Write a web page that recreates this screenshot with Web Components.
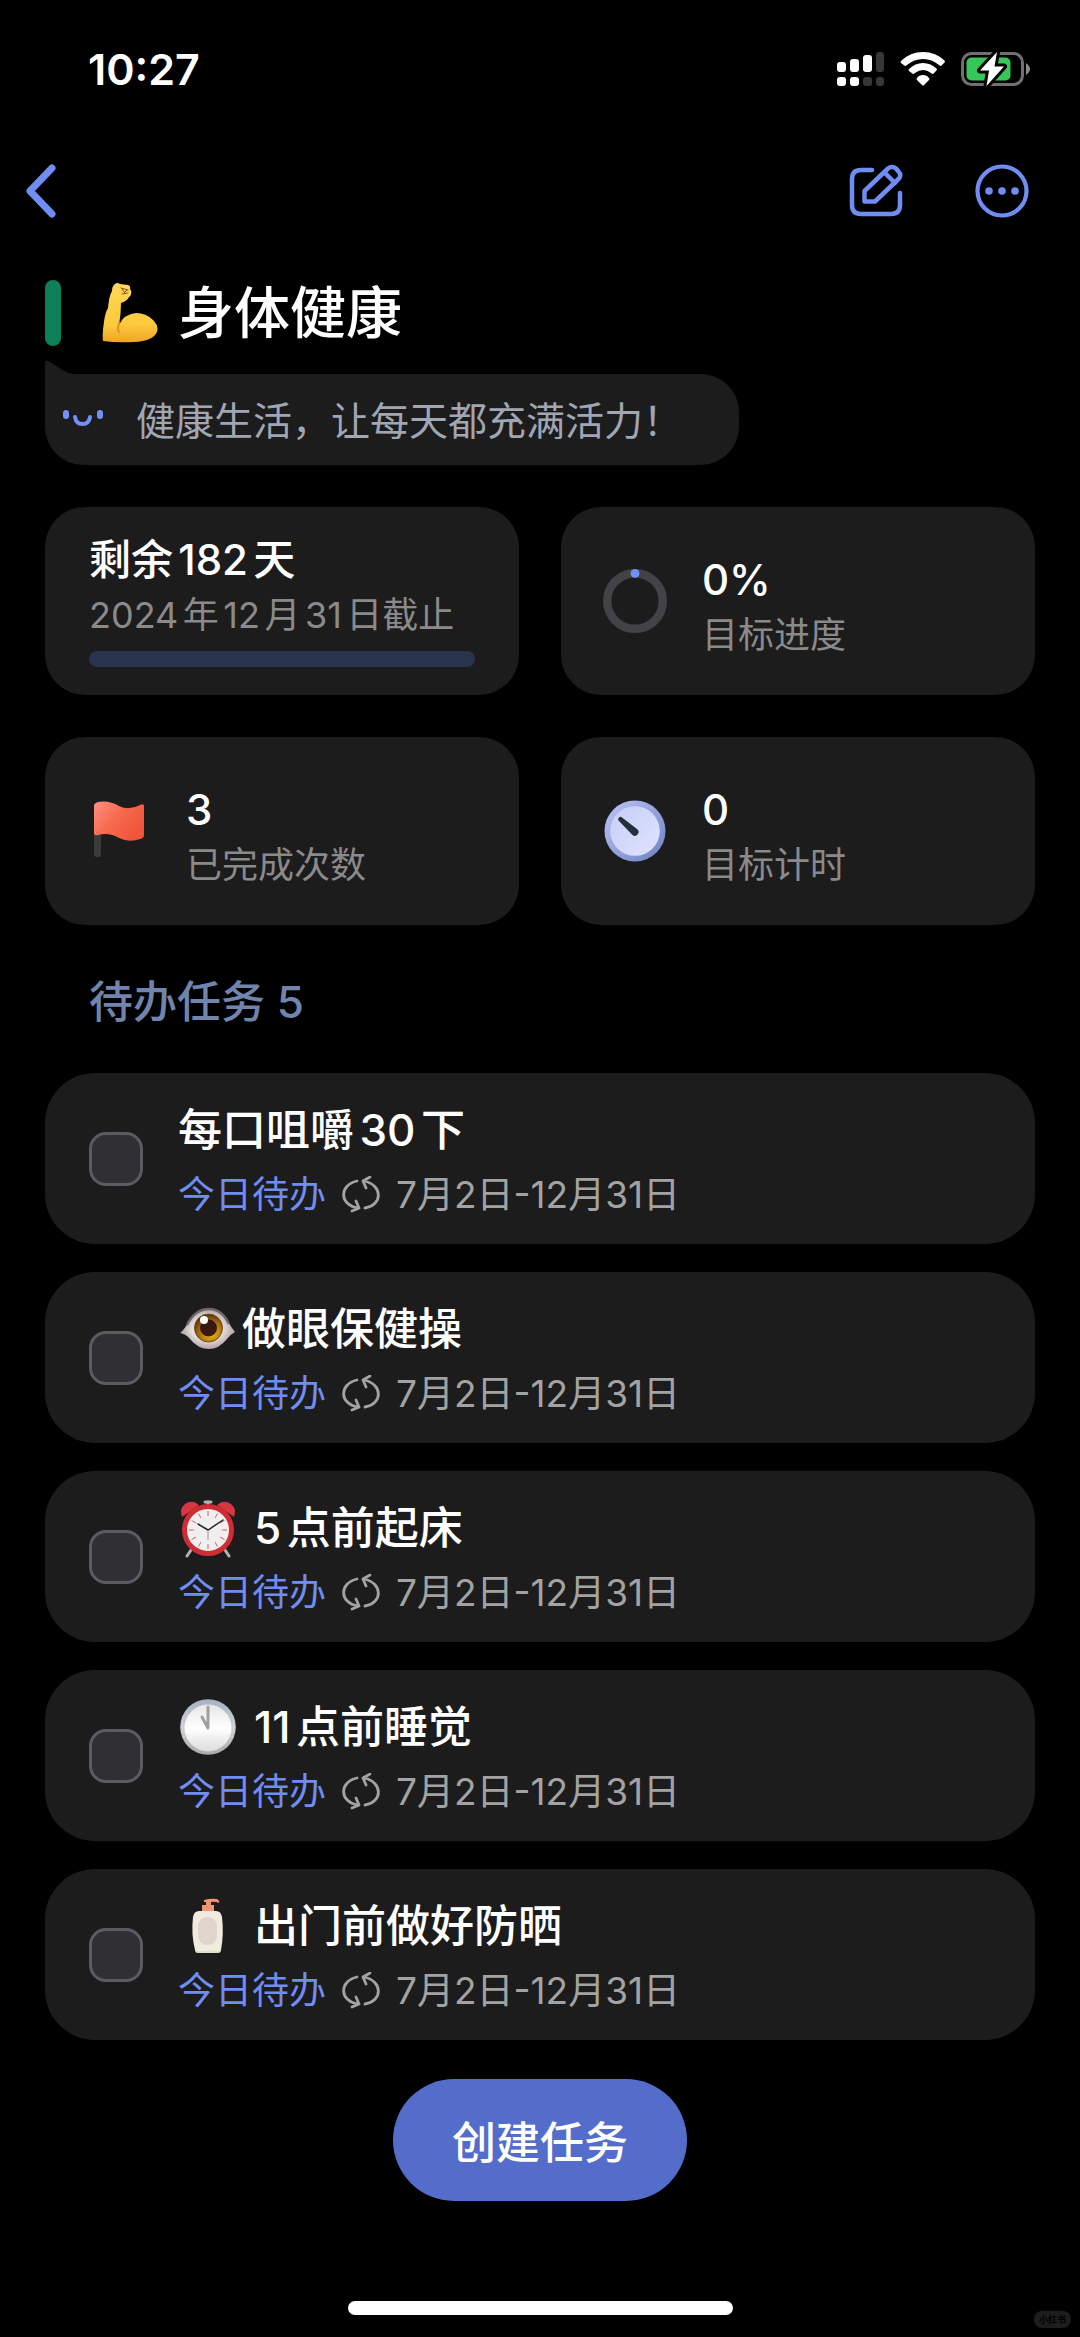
<!DOCTYPE html>
<html lang="zh-CN">
<head>
<meta charset="utf-8">
<meta name="viewport" content="width=device-width, initial-scale=1">
<title>身体健康</title>
<style>
:root {
  --card: #1c1c1d;
  --accent: #708df4;
  --muted: #8a8a8a;
  --gutter: 45px;
}
* { box-sizing: border-box; }
body {
  margin: 0;
  background: #000;
  color: #fff;
  font-family: Inter, "Noto Sans CJK SC", sans-serif;
  text-autospace: normal;
}
</style>
</head>
<body>

<goal-page>
  <status-bar slot="top">10:27</status-bar>
  <nav-bar slot="top"></nav-bar>

  <goal-title icon="arm">身体健康</goal-title>
  <speech-bubble>健康生活，让每天都充满活力！</speech-bubble>

  <stat-grid>
    <deadline-card value="0" max="182">
      剩余182天
      <span slot="label">2024年12月31日截止</span>
    </deadline-card>
    <stat-card icon="ring">0%<span slot="label">目标进度</span></stat-card>
    <stat-card icon="flag">3<span slot="label">已完成次数</span></stat-card>
    <stat-card icon="timer">0<span slot="label">目标计时</span></stat-card>
  </stat-grid>

  <task-list heading="待办任务 5">
    <task-item dates="7月2日-12月31日">每口咀嚼30下</task-item>
    <task-item icon="eye" tight dates="7月2日-12月31日">做眼保健操</task-item>
    <task-item icon="alarm" dates="7月2日-12月31日">5点前起床</task-item>
    <task-item icon="clock" dates="7月2日-12月31日">11点前睡觉</task-item>
    <task-item icon="lotion" dates="7月2日-12月31日">出门前做好防晒</task-item>
  </task-list>

  <create-button>创建任务</create-button>
  <home-indicator slot="bottom"></home-indicator>
  <corner-mark slot="bottom">小红书</corner-mark>
</goal-page>

<script>
var icons = {
  arm: `
    <svg width="60" height="60" viewBox="0 0 60 60">
      <defs>
        <linearGradient id="skin" x1="0" y1="0" x2="0" y2="1">
          <stop offset="0" stop-color="#ffd95a"/>
          <stop offset=".7" stop-color="#fdc93d"/>
          <stop offset="1" stop-color="#f0a424"/>
        </linearGradient>
      </defs>
      <path fill="url(#skin)" d="M15 1Q17-1 20 1L28 2Q31 3 30 6Q32 8 31 11Q31 13 29 14Q27 18 21 20Q21 31 19 42Q24 31 36 30Q46 30 53 37Q59 43 57 49Q53 58 34 59Q17 60 3 58Q2 51 4 39Q5 30 8 25Q9 13 12 8Q12 3 15 1Z"/>
      <path fill="none" stroke="#dd9323" stroke-width="2" stroke-linecap="round" d="M19 40Q17 46 19 49"/>
      <path fill="none" stroke="#8f5514" stroke-width="1" stroke-linecap="round" d="M21 5L28 7M22 11L28 10M22 6L25 10M27 7L24 10"/>
    </svg>`,
  ring: `
    <svg width="64" height="64" viewBox="0 0 64 64">
      <circle cx="32" cy="32" r="27.8" fill="none" stroke="#424346" stroke-width="8.4"/>
      <circle cx="32" cy="4.4" r="4.4" fill="#7290fa"/>
    </svg>`,
  flag: `
    <svg width="64" height="64" viewBox="0 0 64 64">
      <defs>
        <linearGradient id="cloth" x1="0" y1="0" x2="1" y2=".6">
          <stop offset="0" stop-color="#ff9080"/>
          <stop offset=".5" stop-color="#f66a4f"/>
          <stop offset="1" stop-color="#ef5538"/>
        </linearGradient>
      </defs>
      <rect x="7" y="28" width="7" height="30" rx="3" fill="#3b3b3b"/>
      <path fill="url(#cloth)" d="M7 7Q7 4 11 3Q22 1 32 7Q42 12 53 6Q57 4 57 7V36Q57 39 53 40Q42 44 32 39Q22 33 11 36Q7 37 7 34Z"/>
    </svg>`,
  timer: `
    <svg width="64" height="64" viewBox="0 0 64 64">
      <defs>
        <linearGradient id="rim" x1="0" y1="0" x2="1" y2="1">
          <stop offset=".1" stop-color="#b4bff0"/>
          <stop offset="1" stop-color="#6f7fc4"/>
        </linearGradient>
        <linearGradient id="dial" x1="0" y1="0" x2="1" y2="1">
          <stop offset="0" stop-color="#c6cef6"/>
          <stop offset="1" stop-color="#dfe4fd"/>
        </linearGradient>
      </defs>
      <circle cx="32" cy="32" r="30.5" fill="url(#rim)"/>
      <circle cx="32" cy="32" r="24.8" fill="url(#dial)"/>
      <path fill="#22303a" d="M16 22A2 2 0 0 1 19 18.500L34 30A3.600 3.600 0 0 1 29.500 36Z"/>
    </svg>`,
  eye: `
    <svg width="60" height="60" viewBox="0 0 60 60">
      <defs>
        <radialGradient id="ball" cx=".5" cy=".5" r=".55">
          <stop offset=".4" stop-color="#f4eeee"/>
          <stop offset="1" stop-color="#a89595"/>
        </radialGradient>
        <radialGradient id="iris" cx=".6" cy=".7" r=".7">
          <stop offset="0" stop-color="#f0b912"/>
          <stop offset=".6" stop-color="#a87110"/>
          <stop offset="1" stop-color="#57300f"/>
        </radialGradient>
      </defs>
      <path fill="url(#ball)" d="M2 34Q7 30 11 22Q19 10 31 10Q43 10 49 21Q53 28 57 33Q53 35 49 40Q41 50 31 50Q20 50 12 40Q8 35 2 34Z"/>
      <path fill="none" stroke="#6d6768" stroke-width="2.500" d="M9 26Q17 10 31 10Q44 10 51 25"/>
      <circle cx="30.500" cy="29" r="14" fill="url(#iris)" stroke="#6b4a1b"/>
      <circle cx="30.500" cy="29" r="8.500" fill="#3a1812"/>
      <circle cx="26" cy="21" r="4" fill="#fff"/>
    </svg>`,
  alarm: `
    <svg width="60" height="60" viewBox="0 0 60 60">
      <g stroke="#aeb2b8" stroke-width="3" stroke-linecap="round">
        <path d="M13 52L9 58M47 52L51 58M30 8V4"/>
        <path d="M27 4H33"/>
      </g>
      <path fill="#d93644" d="M4 19Q1 11 7 6Q14 1 21 7ZM56 19Q59 11 53 6Q46 1 39 7Z"/>
      <circle cx="30" cy="32" r="23.500" fill="#efefef" stroke="#cf2c36" stroke-width="5"/>
      <g stroke="#d8606a" stroke-width="1">
        <path d="M30 13V18M30 46V51M11 32H16M44 32H49M20.500 15.500L23 20M37 44L39.500 48.500M13.500 22.500L18 25M42 39L46.500 41.500M46.500 22.500L42 25M18 39L13.500 41.500M39.500 15.500L37 20M23 44L20.500 48.500"/>
      </g>
      <path fill="none" stroke="#25282c" stroke-width="1.500" stroke-linecap="round" d="M20 26L30 32L45 22"/>
      <path stroke="#999" stroke-width="1" d="M30 32V42"/>
    </svg>`,
  clock: `
    <svg width="60" height="60" viewBox="0 0 60 60">
      <defs>
        <linearGradient id="case" x1="0" y1="0" x2="0" y2="1">
          <stop offset="0" stop-color="#a7b0c4"/>
          <stop offset=".5" stop-color="#d0d3d5"/>
          <stop offset="1" stop-color="#a9a9a7"/>
        </linearGradient>
        <linearGradient id="plate" x1="0" y1="0" x2="0" y2="1">
          <stop offset="0" stop-color="#e6e6e6"/>
          <stop offset=".5" stop-color="#fff"/>
          <stop offset="1" stop-color="#dcdcdb"/>
        </linearGradient>
      </defs>
      <circle cx="30" cy="30" r="27.800" fill="url(#case)"/>
      <circle cx="30" cy="31" r="23.500" fill="url(#plate)"/>
      <path fill="none" stroke="#a0a0a0" stroke-width="3" stroke-linecap="round" stroke-linejoin="round" d="M24 20L30 31V10"/>
    </svg>`,
  lotion: `
    <svg width="60" height="60" viewBox="0 0 60 60">
      <path fill="#ee9674" d="M26 4Q33 2 39 3Q42 5 41 7Q37 5 33 6V9H36V16H24V9H28V6H26Z"/>
      <path fill="#f1ebdd" d="M21 15H38Q43 15 44 21Q46 38 43 54Q43 57 39 57H21Q17 57 17 54Q13 38 15 21Q16 15 21 15Z"/>
      <rect x="20" y="21" width="19" height="28" rx="9" fill="#e2d5cd"/>
      <path fill="none" stroke="#d8ceb8" stroke-width="1" d="M18 56H42"/>
    </svg>`,
  repeat: `
    <svg width="40" height="38" viewBox="0 0 40 38">
      <g fill="none" stroke="#a3a3a3" stroke-width="2.800" stroke-linecap="round" stroke-linejoin="round">
        <path d="M16 5C-2 9-2 29 17 32"/>
        <path d="M24 32C42 29 42 9 23 5"/>
        <path d="M15 25L18 32L11 35M29 1L22 5L25 12"/>
      </g>
    </svg>`,
  back: `
    <svg width="32" height="56" viewBox="0 0 32 56">
      <path fill="none" stroke="currentColor" stroke-width="7" stroke-linecap="round" stroke-linejoin="round" d="M27 5L5 28L27 51"/>
    </svg>`,
  edit: `
    <svg width="54" height="54" viewBox="0 0 54 54">
      <g fill="none" stroke="currentColor" stroke-width="4.500" stroke-linecap="round" stroke-linejoin="round">
        <path d="M23 6H12Q3 6 3 15V41Q3 50 12 50H42Q51 50 51 41V29"/>
        <path d="M15.500 37V27L39 4.500Q43 1.500 47 4.500L49.500 7.500Q53 11 49.500 15L26 37.500H15.500Z"/>
        <path d="M36 9L46 19"/>
      </g>
    </svg>`,
  more: `
    <svg width="54" height="54" viewBox="0 0 54 54">
      <circle cx="27" cy="27" r="24.500" fill="none" stroke="currentColor" stroke-width="4.200"/>
      <g fill="currentColor">
        <circle cx="14" cy="27" r="3.800"/>
        <circle cx="27" cy="27" r="3.800"/>
        <circle cx="40" cy="27" r="3.800"/>
      </g>
    </svg>`,
  face: `
    <svg width="42" height="20" viewBox="0 0 42 20">
      <rect x="0" y="2" width="6" height="9" rx="3" fill="#7290fa"/>
      <rect x="34" y="2" width="6" height="9" rx="3" fill="#7290fa"/>
      <path fill="none" stroke="#7290fa" stroke-width="4" stroke-linecap="round" d="M12 9Q13 16 19.500 16Q26 16 27 9"/>
    </svg>`,
  signal: `
    <svg width="48" height="36" viewBox="0 0 48 36">
      <g fill="#fff">
        <rect x="0" y="11" width="9" height="10" rx="3"/>
        <rect x="13" y="8" width="9" height="13" rx="3"/>
        <rect x="26" y="4" width="9" height="17" rx="3"/>
        <rect x="0" y="26" width="9" height="9" rx="3"/>
        <rect x="13" y="26" width="9" height="9" rx="3"/>
      </g>
      <g fill="#363636">
        <rect x="39" y="1" width="8" height="20" rx="3"/>
        <rect x="26" y="26" width="9" height="9" rx="3"/>
        <rect x="39" y="26" width="8" height="9" rx="3"/>
      </g>
    </svg>`,
  wifi: `
    <svg width="46" height="36" viewBox="0 0 46 36">
      <g fill="#fff">
        <path d="M1 10Q10 1 23 1Q36 1 45 10Q45 11 44 12L41 15Q40 15 39 14Q32 8 23 8Q14 8 7 14Q6 15 5 15L1 12Q0 11 1 10Z"/>
        <path d="M9 18Q15 12 23 12Q31 12 37 18Q37 19 36 20L33 23Q32 23 31 22Q27 19 23 19Q19 19 15 22Q14 23 13 23L9 20Q8 19 9 18Z"/>
        <path d="M17 27Q19 24 23 24Q27 24 29 27Q30 28 29 29L24 34Q23 35 22 34L17 29Q16 28 17 27Z"/>
      </g>
    </svg>`,
  battery: `
    <svg width="70" height="36" viewBox="0 0 70 36">
      <rect x="1.500" y="2.500" width="60" height="31" rx="9" fill="none" stroke="#707070" stroke-width="3"/>
      <path d="M65 12Q69 15 69 18Q69 21 65 24Z" fill="#8a8a8a"/>
      <rect x="5.500" y="6.500" width="44" height="23" rx="5" fill="#35c759"/>
      <path d="M36 1L19 19.500H28L25.500 35L43 15.500H33.500Z" fill="#fff" stroke="#000" stroke-width="6" stroke-linejoin="round" paint-order="stroke"/>
    </svg>`
};

// every element renders a string of markup into an open root
class BaseElement extends HTMLElement {
  constructor() {
    super();
    this.attachShadow({ mode: "open" });
  }

  connectedCallback() {
    this.shadowRoot.innerHTML = `
      <style>
        * { box-sizing: border-box; }
        svg { display: block; flex: none; }
      </style>
      ${this.render()}
    `;
  }
}

class GoalPage extends BaseElement {
  render() {
    return `
<style>
:host {
  display: flex;
  flex-direction: column;
  position: relative;
  min-height: 100vh;
}
main {
  display: flex;
  flex-direction: column;
  padding: 36px var(--gutter) 40px;
}
footer { margin-top: auto; }
</style>
<header><slot name="top"></slot></header>
<main><slot></slot></main>
<footer><slot name="bottom"></slot></footer>`;
  }
}

class StatusBar extends BaseElement {
  render() {
    return `
<style>
:host {
  display: flex;
  align-items: center;
  justify-content: space-between;
  height: 138px;
  padding: 0 49px 0 88px;
  font-size: 43px;
  font-weight: 600;
}
.indicators { display: flex; gap: 15px; }
</style>
<slot></slot>
<div class="indicators">${icons.signal}${icons.wifi}${icons.battery}</div>`;
  }
}

class NavBar extends BaseElement {
  render() {
    return `
<style>
:host {
  display: flex;
  align-items: center;
  height: 106px;
  padding: 0 51px 0 25px;
}
button {
  padding: 0;
  border: 0;
  background: none;
  color: var(--accent);
  cursor: pointer;
}
.back { margin-right: auto; }
.more { margin-left: 72px; }
</style>
<button class="back" aria-label="返回">${icons.back}</button>
<button aria-label="编辑">${icons.edit}</button>
<button class="more" aria-label="更多">${icons.more}</button>`;
  }
}

class GoalTitle extends BaseElement {
  render() {
    return `
<style>
:host {
  display: flex;
  align-items: center;
}
.bar {
  width: 16px;
  height: 66px;
  margin-right: 39px;
  border-radius: 8px;
  background: #0c8059;
}
h1 {
  margin: 0 0 0 18px;
  font-size: 56px;
  line-height: 66px;
  font-weight: 500;
}
</style>
<span class="bar"></span>
${icons[this.getAttribute("icon")]}
<h1><slot></slot></h1>`;
  }
}

class SpeechBubble extends BaseElement {
  render() {
    return `
<style>
:host {
  display: flex;
  align-items: center;
  align-self: flex-start;
  gap: 31px;
  position: relative;
  height: 91px;
  margin-top: 28px;
  padding: 0 57px 4px 18px;
  border-radius: 0 38px 38px 38px;
  background: var(--card);
  color: #a1a6b4;
  font-size: 39px;
}
.tail {
  position: absolute;
  left: 0;
  bottom: 100%;
}
</style>
<svg class="tail" width="30" height="14" viewBox="0 0 30 14">
  <path fill="#1c1c1d" d="M0 14V2Q1-1 5 2L16 9Q23 14 30 14Z"/>
</svg>
${icons.face}
<span><slot></slot></span>`;
  }
}

class StatGrid extends BaseElement {
  render() {
    return `
<style>
:host {
  display: grid;
  grid-template-columns: 1fr 1fr;
  gap: 42px;
  margin-top: 42px;
}
</style>
<slot></slot>`;
  }
}

var cardStyle = `
:host {
  display: flex;
  min-height: 188px;
  border-radius: 40px;
  background: var(--card);
}
.value {
  font-size: 42px;
  line-height: 54px;
  font-weight: 500;
}
.label {
  color: var(--muted);
  font-size: 36px;
  line-height: 56px;
}`;

class StatCard extends BaseElement {
  render() {
    return `
<style>
${cardStyle}
:host {
  align-items: center;
  gap: 35px;
  padding: 0 42px;
}
.text { padding-top: 14px; }
</style>
${icons[this.getAttribute("icon")]}
<div class="text">
  <div class="value"><slot></slot></div>
  <div class="label"><slot name="label"></slot></div>
</div>`;
  }
}

class DeadlineCard extends BaseElement {
  render() {
    return `
<style>
${cardStyle}
:host {
  flex-direction: column;
  justify-content: center;
  padding: 0 44px 2px;
}
progress {
  appearance: none;
  display: block;
  width: 100%;
  height: 16px;
  margin-top: 8px;
  border: 0;
  border-radius: 8px;
  overflow: hidden;
  background: #2a334d;
}
progress::-webkit-progress-bar { background: #2a334d; }
progress::-webkit-progress-value { background: var(--accent); }
</style>
<div class="value"><slot></slot></div>
<div class="label" id="label"><slot name="label"></slot></div>
<progress aria-labelledby="label" value="${this.getAttribute("value")}" max="${this.getAttribute("max")}"></progress>`;
  }
}

class TaskList extends BaseElement {
  render() {
    return `
<style>
h2 {
  margin: 47px 44px 41px;
  color: #7084ae;
  font-size: 44px;
  line-height: 60px;
  font-weight: 500;
}
.items {
  display: flex;
  flex-direction: column;
  gap: 28px;
}
</style>
<h2>${this.getAttribute("heading")}</h2>
<div class="items"><slot></slot></div>`;
  }
}

class TaskItem extends BaseElement {
  render() {
    var icon = icons[this.getAttribute("icon")] || "";
    return `
<style>
:host {
  --icon-gap: 16px;
  display: flex;
  align-items: center;
  gap: 35px;
  min-height: 171px;
  padding: 0 44px;
  border-radius: 50px;
  background: var(--card);
}
:host([tight]) { --icon-gap: 4px; }
input {
  appearance: none;
  flex: none;
  width: 54px;
  height: 54px;
  margin: 0;
  border: 3px solid #5b5c61;
  border-radius: 17px;
  background: #303034;
}
input:checked { background: var(--accent); }
.text { padding-top: 4px; }
label {
  display: flex;
  align-items: center;
  gap: var(--icon-gap);
  height: 60px;
  font-size: 44px;
  line-height: 60px;
  font-weight: 500;
}
.meta {
  display: flex;
  align-items: center;
  gap: 15px;
  margin-top: 8px;
  color: #a3a3a3;
  font-size: 37px;
  line-height: 54px;
  text-autospace: no-autospace;
}
.today { color: var(--accent); }
</style>
<input type="checkbox" id="done">
<div class="text">
  <label for="done">${icon}<span><slot></slot></span></label>
  <div class="meta">
    <span class="today">今日待办</span>
    ${icons.repeat}
    <span>${this.getAttribute("dates")}</span>
  </div>
</div>`;
  }
}

class CreateButton extends BaseElement {
  render() {
    return `
<style>
:host {
  align-self: center;
  margin-top: 39px;
}
button {
  display: block;
  height: 122px;
  padding: 0 59px;
  border: 0;
  border-radius: 61px;
  background: #556dca;
  color: #fff;
  font: inherit;
  font-size: 44px;
  font-weight: 500;
  cursor: pointer;
}
</style>
<button><slot></slot></button>`;
  }
}

class HomeIndicator extends BaseElement {
  render() {
    return `
<style>
:host {
  display: block;
  width: 385px;
  height: 14px;
  margin: 0 auto 22px;
  border-radius: 7px;
  background: #fff;
}
</style>`;
  }
}

class CornerMark extends BaseElement {
  render() {
    return `
<style>
:host {
  position: absolute;
  right: 9px;
  bottom: 9px;
  padding: 0 5px;
  border-radius: 8px;
  background: #1d1d1d;
  color: #000;
  font-size: 9px;
  line-height: 17px;
  font-weight: 700;
}
</style>
<slot></slot>`;
  }
}

window.customElements.define("goal-page", GoalPage);
window.customElements.define("status-bar", StatusBar);
window.customElements.define("nav-bar", NavBar);
window.customElements.define("goal-title", GoalTitle);
window.customElements.define("speech-bubble", SpeechBubble);
window.customElements.define("stat-grid", StatGrid);
window.customElements.define("stat-card", StatCard);
window.customElements.define("deadline-card", DeadlineCard);
window.customElements.define("task-list", TaskList);
window.customElements.define("task-item", TaskItem);
window.customElements.define("create-button", CreateButton);
window.customElements.define("home-indicator", HomeIndicator);
window.customElements.define("corner-mark", CornerMark);
</script>
</body>
</html>
